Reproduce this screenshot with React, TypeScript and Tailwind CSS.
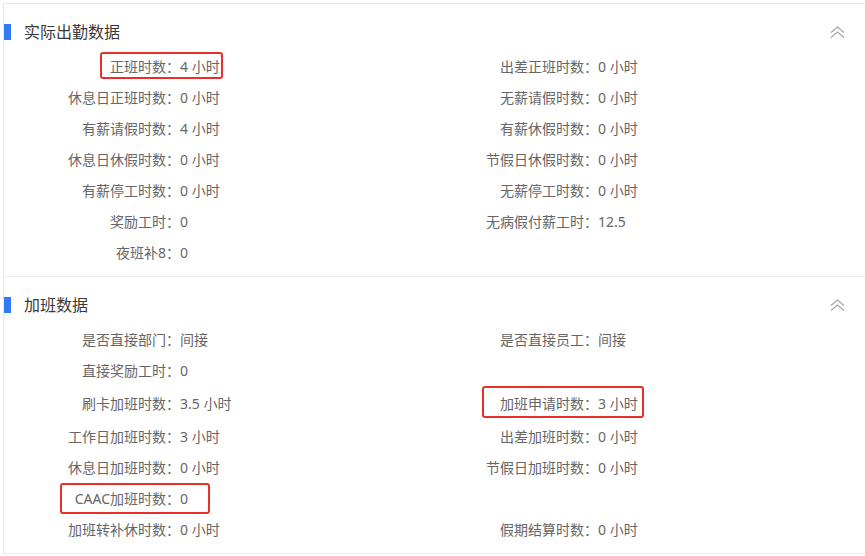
import React from "react";

type Cell = { label: string; value: string } | null;

type Mark = { top: number; left: number; width: number; height: number };

type Row = {
    left: Cell;
    right: Cell;
    h?: string;
    markLeft?: Mark;
    markRight?: Mark;
};

const attendance: Row[] = [
    {
        left: { label: "正班时数：", value: "4 小时" },
        right: { label: "出差正班时数：", value: "0 小时" },
        markLeft: { top: 1, left: 96, width: 123, height: 27 },
    },
    { left: { label: "休息日正班时数：", value: "0 小时" }, right: { label: "无薪请假时数：", value: "0 小时" } },
    { left: { label: "有薪请假时数：", value: "4 小时" }, right: { label: "有薪休假时数：", value: "0 小时" } },
    { left: { label: "休息日休假时数：", value: "0 小时" }, right: { label: "节假日休假时数：", value: "0 小时" } },
    { left: { label: "有薪停工时数：", value: "0 小时" }, right: { label: "无薪停工时数：", value: "0 小时" } },
    { left: { label: "奖励工时：", value: "0" }, right: { label: "无病假付薪工时：", value: "12.5" } },
    { left: { label: "夜班补8：", value: "0" }, right: null },
];

const overtime: Row[] = [
    { left: { label: "是否直接部门：", value: "间接" }, right: { label: "是否直接员工：", value: "间接" } },
    { left: { label: "直接奖励工时：", value: "0" }, right: null },
    {
        left: { label: "刷卡加班时数：", value: "3.5 小时" },
        right: { label: "加班申请时数：", value: "3 小时" },
        h: "h-[35px]",
        markRight: { top: 0, left: 48, width: 162, height: 32 },
    },
    { left: { label: "工作日加班时数：", value: "3 小时" }, right: { label: "出差加班时数：", value: "0 小时" } },
    { left: { label: "休息日加班时数：", value: "0 小时" }, right: { label: "节假日加班时数：", value: "0 小时" } },
    {
        left: { label: "CAAC加班时数：", value: "0" },
        right: null,
        markLeft: { top: 0, left: 56, width: 150, height: 31 },
    },
    { left: { label: "加班转补休时数：", value: "0 小时" }, right: { label: "假期结算时数：", value: "0 小时" } },
];

function ChevronsUp() {
    return (
        <svg width="15" height="13" viewBox="0 0 15 13" fill="none" stroke="#a3a3a3" strokeWidth="1.1">
            <path d="M1 6.5 L7.5 1 L14 6.5" />
            <path d="M1 11.5 L7.5 6 L14 11.5" />
        </svg>
    );
}

function Field({ cell, labelW, mark }: { cell: Cell; labelW: string; mark?: Mark }) {
    return (
        <div className="relative flex h-full items-center">
            {cell && (
                <>
                    <span className={`${labelW} shrink-0 text-right`}>{cell.label}</span>
                    <span>{cell.value}</span>
                </>
            )}
            {/* red annotation box */}
            {mark && (
                <div
                    className="absolute rounded-[3px] border-2 border-[#ea2f2a]"
                    style={{ top: mark.top, left: mark.left, width: mark.width, height: mark.height }}
                />
            )}
        </div>
    );
}

function Section({ title, rows, first }: { title: string; rows: Row[]; first?: boolean }) {
    return (
        <div className={`${first ? "border-t border-[#e8e8e8]" : "border-y border-[#ebebeb]"} pb-[8px]`}>
            <div className="flex h-[47px] items-center justify-between pt-[9px] pr-[20px]">
                <div className="flex items-center">
                    <div className="h-[16px] w-[7px] bg-[#2f7cf6]" />
                    <span className="ml-[13px] text-[16px] text-[#3a3a3a]">{title}</span>
                </div>
                <ChevronsUp />
            </div>
            {rows.map((row, i) => (
                <div key={i} className={`grid grid-cols-[430px_1fr] ${row.h ?? "h-[31px]"}`}>
                    <Field cell={row.left} labelW="w-[176px]" mark={row.markLeft} />
                    <Field cell={row.right} labelW="w-[164px]" mark={row.markRight} />
                </div>
            ))}
        </div>
    );
}

export default function App() {
    return (
        <div
            className="h-[556px] w-[865px] overflow-hidden bg-white pl-[3px] pt-[3px] text-[14px] text-[#666]"
            style={{ fontFamily: '"Noto Sans", "Noto Sans CJK SC", sans-serif' }}
        >
            <div className="border-l border-[#e8e8e8]">
                <Section title="实际出勤数据" rows={attendance} first />
                <Section title="加班数据" rows={overtime} />
            </div>
        </div>
    );
}
